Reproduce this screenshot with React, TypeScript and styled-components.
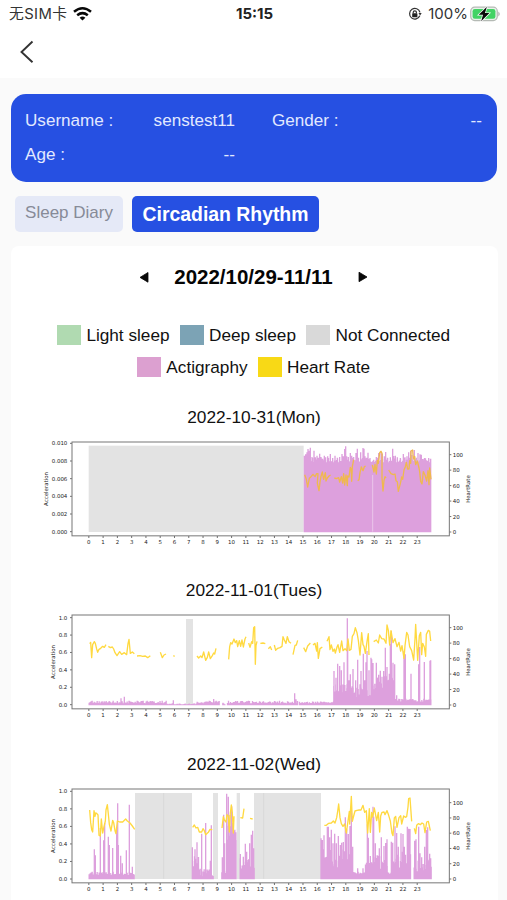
import React from "react";
import styled, { createGlobalStyle } from "styled-components";

const GlobalStyle = createGlobalStyle`
  *, *::before, *::after { box-sizing: border-box; }
  html, body { margin: 0; height: 900px; overflow: hidden; background: #fafafa; }
  body { font-family: "Liberation Sans", Arial, sans-serif; color: #111; }
`;

const Screen = styled.div`
  width: 507px;
  height: 900px;
  overflow: hidden;
  display: flex;
  flex-direction: column;
  > * { flex-shrink: 0; }
`;

const StatusBar = styled.header`
  display: grid;
  grid-template-columns: 1fr auto 1fr;
  align-items: center;
  height: 28px;
  padding: 0 6px 0 9px;
  background: #fff;
  font: 15px/28px Inter, "Noto Sans CJK SC", sans-serif;
  color: #333;
`;

const StatusGroup = styled.div<{ $end?: boolean }>`
  display: flex;
  align-items: center;
  justify-content: ${(p) => (p.$end ? "flex-end" : "flex-start")};
`;

const Carrier = styled.span`
  font-size: 14.8px;
  letter-spacing: 0.4px;
  margin-right: 6px;
  white-space: nowrap;
`;

const Clock = styled.strong`
  font-size: 15px;
  font-weight: 700;
  color: #222;
  margin-right: 1px;
`;

const Percent = styled.span`
  margin: 0 2px 0 6px;
  font-size: 15px;
`;

const NavBar = styled.nav`
  height: 50px;
  padding: 12px 0 0 20px;
  background: #fff;
`;

const Profile = styled.section`
  display: grid;
  grid-template-columns: 210px 210px;
  column-gap: 37px;
  grid-auto-rows: 34px;
  margin: 16px 10px 0 11px;
  padding: 10px 14px 0;
  height: 88px;
  border-radius: 15px;
  background: #2650e2;
  color: #e2e9ff;
`;

const Field = styled.div`
  display: flex;
  justify-content: space-between;
  font-size: 17.1px;
  line-height: 34px;
`;

const Tabs = styled.div`
  display: flex;
  gap: 9px;
  padding: 14px 15px 0;
`;

const Tab = styled.button<{ $active?: boolean }>`
  height: 36px;
  width: ${(p) => (p.$active ? 187 : 108)}px;
  padding: ${(p) => (p.$active ? "1px 0 0" : "0 0 3px")};
  border: 0;
  border-radius: 5px;
  white-space: nowrap;
  font-family: inherit;
  font-size: ${(p) => (p.$active ? 19.4 : 17)}px;
  font-weight: ${(p) => (p.$active ? 700 : 400)};
  color: ${(p) => (p.$active ? "#fff" : "#878b98")};
  background: ${(p) => (p.$active ? "#2650e2" : "#e5e9f7")};
`;

const Card = styled.main`
  height: 680px;
  margin: 14px 9px 0 11px;
  border-radius: 8px 8px 0 0;
  background: #fff;
`;

const DateNav = styled.div`
  display: flex;
  align-items: center;
  justify-content: center;
  gap: 25px;
  height: 61px;
  padding-right: 2px;
  color: #050505;
`;

const DateRange = styled.span`
  font-size: 20.5px;
  font-weight: 700;
`;

const Legend = styled.div`
  display: flex;
  flex-direction: column;
  gap: 12px;
  padding: 18px 2px 0 0;
`;

const LegendRow = styled.div`
  display: flex;
  justify-content: center;
  gap: 10px;
  height: 20px;
`;

const LegendItem = styled.div`
  display: flex;
  align-items: center;
  gap: 5px;
  font-size: 17.2px;
  line-height: 20px;
  white-space: nowrap;
`;

const Swatch = styled.span<{ $color: string }>`
  width: 24.5px;
  height: 20px;
  background: ${(p) => p.$color};
`;

const ChartList = styled.div`
  padding-top: 27px;
`;

const Day = styled.section`
  height: 173.35px;
`;

const DayTitle = styled.h2`
  margin: 0;
  height: 29px;
  text-align: center;
  font-size: 17.3px;
  font-weight: 400;
  line-height: 26px;
  padding-right: 1px;
`;

const Plot = styled.svg`
  display: block;
  width: 440px;
  height: 114px;
  margin-left: 24px;
  text {
    font-family: "DejaVu Sans", sans-serif;
    font-size: 16.4px;
    fill: #222;
  }
`;

type Pt = [number, number];
type Run = { from: number; to: number; y: number; jitter: number };
type Chart = {
  title: string;
  dy: number;
  accTicks: [string, number][];
  labelX: number;
  hr100: number;
  base: number;
  greys: Pt[];
  greyTop: number;
  lines: number[];
  runs: Run[];
  spikes: string;
  beats: string;
  beatColor: string;
  gapX?: number;
};

const ticks = (labels: string[], first: number, last: number): [string, number][] =>
  labels.map((l, i) => [l, first + ((last - first) * i) / (labels.length - 1)]);

const unit = ["1.0", "0.8", "0.6", "0.4", "0.2", "0.0"];

const charts: Chart[] = [
  {
    title: "2022-10-31(Mon)",
    dy: -100,
    accTicks: ticks(["0.010", "0.008", "0.006", "0.004", "0.002", "0.000"], 131, 396),
    labelX: -2,
    hr100: 165,
    base: 396,
    greys: [[161, 806]],
    greyTop: 138,
    lines: [],
    beatColor: "#efb84f",
    gapX: 1013,
    runs: [{ from: 807, to: 1188, y: 181, jitter: 7 }],
    spikes:
      "808,168 812,164 816,158 819,148 822,153 826,144 831,172 837,153 841,173 846,168 850,174 854,162 858,172 863,177 868,168 872,173 878,170 886,163 893,175 900,168 907,174 914,172 921,163 925,170 929,148 932,140 935,170 940,172 946,160 950,168 956,172 963,160 967,147 970,174 977,158 984,145 987,147 990,170 995,174 999,159 1005,175 1016,180 1024,172 1031,160 1038,158 1042,162 1048,170 1052,157 1058,175 1066,173 1073,147 1076,169 1081,168 1087,173 1096,175 1105,163 1110,173 1116,170 1121,158 1127,153 1131,166 1138,151 1144,174 1149,160 1155,164 1159,165 1167,178 1175,184 1181,175 1187,177",
    beats:
      "809,225 814,239 818,262 823,236 828,231 834,224 840,231 845,222 849,222 847,250 852,273 855,247 858,230 862,217 866,239 871,219 873,244 877,235 882,229 887,226|898,235 904,237 911,234 914,247 919,231 923,250 926,222 929,256 933,226 937,258 938,229 942,232 946,203 949,211 950,245 952,201 956,180|968,243 972,240 975,219 979,202 984,213 988,201 992,199|1012,196 1017,217 1020,194 1024,223 1027,182 1030,191 1034,159 1038,155 1041,161 1041,234 1044,274 1047,242 1050,231 1053,235|1061,211 1068,222 1075,225 1080,223 1083,243 1087,246 1090,275 1096,252 1100,232 1103,239 1107,211 1111,201 1114,188 1118,208 1122,208 1124,183 1127,191 1128,154 1133,151 1135,178 1139,170 1142,195 1147,184 1152,205 1154,216 1157,245 1161,253 1165,216 1170,226 1175,244 1179,213 1182,255 1184,205 1188,239",
  },
  {
    title: "2022-11-01(Tues)",
    dy: -95,
    accTicks: ticks(unit, 130, 391),
    labelX: 19,
    hr100: 160,
    base: 391,
    greys: [[453, 474]],
    greyTop: 134,
    lines: [],
    beatColor: "#ffd940",
    runs: [
      { from: 161, to: 395, y: 383, jitter: 4 },
      { from: 395, to: 485, y: 389, jitter: 2 },
      { from: 485, to: 552, y: 383, jitter: 4 },
      { from: 562, to: 570, y: 388, jitter: 3 },
      { from: 576, to: 787, y: 383, jitter: 4 },
      { from: 792, to: 895, y: 384, jitter: 3 },
      { from: 895, to: 950, y: 343, jitter: 13 },
      { from: 950, to: 1018, y: 350, jitter: 18 },
      { from: 1018, to: 1078, y: 322, jitter: 20 },
      { from: 1078, to: 1188, y: 378, jitter: 5 },
    ],
    spikes:
      "258,372 268,367 247,380 282,379 375,380 415,378 536,374 545,382 564,385 779,357 783,375 897,290 903,310 908,268 914,275 919,288 927,264 936,330 942,318 946,300 950,345 937,132 938,202 954,284 962,318 968,256 975,330 978,290 985,238 989,318 993,264 996,230 1002,288 1008,250 1010,255 1014,266 1024,265 1031,301 1036,289 1041,307 1046,290 1051,220 1056,278 1063,298 1066,208 1069,170 1074,265 1079,270 1085,363 1108,252 1111,240 1107,230 1128,298 1151,270 1154,218 1168,263 1185,259 1187,258",
    beats:
      "164,208 167,204 170,250 173,211 178,202 181,207 185,224 188,234 192,225 197,222 203,216 208,219 213,211|220,216 226,220 232,218 236,224 240,235 246,244 254,232 260,240 268,235 275,241 279,208 282,195 286,237 292,233 298,238|306,245 315,244 323,246 331,245 338,250 346,244|376,234 382,250 387,242 393,239|415,244 419,246|486,245 491,251 497,245 501,250 506,233 512,258 517,249 521,233 526,253 532,244 536,236 539,239 543,222|581,255 584,217 587,205 591,209 597,194 601,205 605,199 608,217 613,199 617,216 621,197 625,218 630,194 633,187|641,206 645,219 650,202 653,207 656,160 659,157 661,270 663,214 666,201|676,207 684,206 691,208|700,223 706,217 710,227|718,212 722,228 728,222 735,220 741,216 744,187 748,197 753,207 757,187 762,202 768,207|774,241 780,213 784,212 788,198|806,220 812,232 818,215 826,206|834,212 840,207 845,230 847,205 850,252 855,223 862,218|876,201 882,187 885,226 889,212 894,231 898,224 901,236 906,218 909,211 914,234 920,200 924,229 930,223 935,229 939,194 943,228 948,225 952,186 957,178 961,160 966,175 970,198 975,242 980,175 984,211 987,216 991,237 996,202 1000,178 1002,242|1016,202 1024,197 1030,206 1034,182 1040,193 1047,194 1053,207 1056,152 1060,168 1064,212 1068,169 1074,205 1080,193 1086,217 1092,204 1097,230 1101,214 1107,252 1110,214 1115,174 1119,182 1124,217 1130,229 1136,257 1140,193 1142,150 1148,258 1153,184 1157,174 1160,241 1163,207 1168,218 1172,246 1174,180 1180,168 1184,171 1187,200",
  },
  {
    title: "2022-11-02(Wed)",
    dy: -90,
    accTicks: ticks(unit, 124, 387),
    labelX: 19,
    hr100: 158,
    base: 386,
    greys: [[300, 471], [534, 549], [605, 615], [657, 858]],
    greyTop: 129,
    lines: [386, 686],
    beatColor: "#ffd940",
    runs: [
      { from: 161, to: 299, y: 370, jitter: 5 },
      { from: 471, to: 491, y: 337, jitter: 20 },
      { from: 491, to: 534, y: 368, jitter: 12 },
      { from: 559, to: 574, y: 360, jitter: 14 },
      { from: 574, to: 602, y: 248, jitter: 22 },
      { from: 614, to: 657, y: 340, jitter: 16 },
      { from: 857, to: 953, y: 325, jitter: 30 },
      { from: 953, to: 990, y: 368, jitter: 3 },
      { from: 990, to: 1010, y: 348, jitter: 14 },
      { from: 1010, to: 1057, y: 335, jitter: 22 },
      { from: 1057, to: 1068, y: 369, jitter: 4 },
      { from: 1068, to: 1128, y: 325, jitter: 28 },
      { from: 1136, to: 1188, y: 345, jitter: 20 },
    ],
    spikes:
      "178,298 181,316 196,234 206,271 209,219 223,285 220,260 233,294 245,240 248,160 250,285 257,317 262,340 274,301 283,164 292,350 472,292 480,298 486,277 500,251 512,219 526,332 529,226 562,322 566,194 569,280 575,131 580,140 585,195 590,169 594,220 598,290 603,270 616,312 625,320 631,281 635,305 641,328 644,280 649,254 653,242 656,295 858,265 862,270 867,256 877,230 880,230 884,262 889,239 894,280 899,251 904,280 910,258 916,285 920,278 925,276 931,202 935,238 940,252 945,228 949,215 953,290 949,170 968,355 984,355 997,223 1000,263 1006,318 1014,170 1016,200 1021,280 1026,325 1033,295 1039,262 1047,288 1052,279 1056,268 1069,275 1073,278 1080,229 1085,249 1090,290 1098,250 1104,252 1108,290 1117,230 1121,236 1125,237 1139,272 1143,268 1151,230 1155,310 1160,322 1169,290 1174,240 1178,232 1184,311 1187,325",
    beats:
      "164,180 167,218 170,239 173,246 177,182 180,199 182,189 185,190 189,195 192,256 196,258 199,207 203,249 207,230 211,213 213,180 217,164 220,192 223,223 228,243 233,211 236,218 240,242 243,251 247,213 254,216 263,216 272,207 277,213 285,219 292,228 299,238|473,232 478,225 483,234 488,232 493,246 500,246 504,236 508,242 512,254 520,247 525,238 532,239|561,234 565,200 568,210 573,216 576,194 580,198 583,246 586,189 589,165 592,188 595,249 597,199|616,203 623,204 627,176|645,205 653,207|868,226 874,226 881,220 889,219 895,213 900,219 905,203 908,184 911,162 915,203 919,221 924,229 929,222 934,249 939,213 943,184 944,222 949,139 952,214 956,198 960,183 966,181 972,180 978,180 984,166 989,187 994,182 998,249 1003,176 1006,247 1010,187 1013,201 1018,174 1021,190 1025,212 1030,187 1034,246 1037,198 1041,187 1047,186 1050,194 1056,182 1061,196 1066,213 1071,250 1074,257 1078,204 1082,199 1086,232 1092,203 1097,197 1100,222 1106,198 1111,202 1115,200 1119,171 1121,146 1125,144 1130,214|1138,235 1142,251 1145,226 1150,221 1156,224 1161,219 1166,222 1170,248 1175,216 1180,214 1186,242",
  },
];

/* Minute-level activity rises from a resting level with a small repeatable variation. */
function activityPath(chart: Chart): string {
  let seed = 17;
  const next = () => {
    seed = (seed * 1103515245 + 12345) % 2147483648;
    return seed / 2147483648;
  };
  const cols: string[] = [];
  chart.runs.forEach((run) => {
    for (let x = run.from; x < run.to; x += 3) {
      const top = run.y + (next() * 2 - 1) * run.jitter;
      cols.push(`M${x + 1.5} ${chart.base + 2}V${Math.min(top, chart.base - 1).toFixed(1)}`);
    }
  });
  chart.spikes.split(" ").forEach((s) => {
    const [x, y] = s.split(",");
    cols.push(`M${x} ${chart.base + 2}V${y}`);
  });
  return cols.join("");
}

const beatPath = (beats: string) =>
  beats.split("|").map((part) => "M" + part.split(" ").join("L")).join("");

function DayChart({ chart }: { chart: Chart }) {
  const hours = Array.from({ length: 24 }, (_, h) => h);
  const hrTicks = ticks(["100", "80", "60", "40", "20", "0"], chart.hr100, chart.base + 1);
  return (
    <Day>
      <DayTitle>{chart.title}</DayTitle>
      <Plot viewBox="0 0 1320 342">
        <g transform={`translate(0 ${chart.dy})`}>
          {chart.greys.map(([a, b]) => (
            <rect key={a} x={a} y={chart.greyTop} width={b - a} height={chart.base - chart.greyTop + 1} fill="#e3e3e3" />
          ))}
          {chart.lines.map((x) => (
            <path key={x} d={`M${x} ${chart.greyTop}V${chart.base}`} stroke="#d8d8d8" strokeWidth="3" />
          ))}
          <path d={activityPath(chart)} stroke="#dda0dd" strokeWidth="4" fill="none" />
          {chart.gapX && <path d={`M${chart.gapX} 226V396`} stroke="#ecccec" strokeWidth="2.5" />}
          <path d={beatPath(chart.beats)} stroke={chart.beatColor} strokeWidth="4" strokeLinejoin="round" fill="none" />
          {chart.accTicks.map(([label, y]) => (
            <g key={label}>
              <path d={`M105 ${y}H111`} stroke="#555" strokeWidth="2.5" />
              <text x="97" y={y + 6} textAnchor="end">{label}</text>
            </g>
          ))}
          {hrTicks.map(([label, y]) => (
            <g key={label}>
              <path d={`M1243 ${y}H1249`} stroke="#555" strokeWidth="2.5" />
              <text x="1253" y={y + 6}>{label}</text>
            </g>
          ))}
        </g>
        <rect x="111" y="27" width="1132" height="281.5" fill="none" stroke="#777" strokeWidth="3" />
        {hours.map((h) => (
          <g key={h}>
            <path d={`M${161.5 + h * 42.83} 309v6`} stroke="#555" strokeWidth="2.5" />
            <text x={161.5 + h * 42.83} y="333" textAnchor="middle">{h}</text>
          </g>
        ))}
        <text transform={`translate(${chart.labelX + 40} 168) rotate(-90)`} textAnchor="middle">Acceleration</text>
        <text transform="translate(1304 168) rotate(-90)" textAnchor="middle">HeartRate</text>
      </Plot>
    </Day>
  );
}

const WifiIcon = () => (
  <svg width="19" height="14" viewBox="0 0 19 14" fill="none" stroke="#080808" strokeWidth="2.5">
    <path d="M1 4.8Q9.5-2.2 18 4.8" />
    <path d="M4.2 8.3Q9.5 4 14.8 8.3" />
    <path d="M6.6 10.7Q9.5 8.3 12.4 10.7L9.5 13.6Z" fill="#080808" stroke="none" />
  </svg>
);

const RotationLockIcon = () => (
  <svg width="14" height="14" viewBox="0 0 14 14" fill="none" stroke="#333" strokeWidth="1.2">
    <path d="M11.8 8.8A5.3 5.3 0 1 1 12 5.3" />
    <path d="M10.5 6H13.7L12.1 8.5Z" fill="#333" stroke="none" />
    <rect x="4.2" y="6.3" width="5.2" height="3.9" rx=".6" fill="#222" stroke="none" />
    <path d="M5.2 6.5V5.4a1.6 1.6 0 0 1 3.2 0v1.1" />
  </svg>
);

const BatteryIcon = () => (
  <svg width="31" height="16" viewBox="0 0 31 16">
    <rect x=".7" y="1.2" width="26.6" height="13.4" rx="4" fill="#e8f2e9" stroke="#b5bab5" strokeWidth="1.2" />
    <rect x="2.6" y="3.1" width="22.8" height="9.6" rx="2.2" fill="#43d365" />
    <path d="M28.4 5.5Q31 8 28.4 10.4Z" fill="#aaa" />
    <path d="M16.9.8L8.7 8.8H13L11.2 15.3 19.4 7.1H15Z" fill="#080808" stroke="#fff" strokeWidth="1.4" paintOrder="stroke" />
  </svg>
);

const Arrow = ({ next }: { next?: boolean }) => (
  <svg width="10" height="12" viewBox="0 0 10 12">
    <path d={next ? "M1 1.2L9 6 1 10.7Z" : "M9 1.5L1 6.4 9 11.2Z"} fill="#080808" stroke="#080808" strokeWidth=".8" strokeLinejoin="round" />
  </svg>
);

const legendRows = [
  [["Light sleep", "#b0dab1"], ["Deep sleep", "#7ca3b5"], ["Not Connected", "#d9d9d9"]],
  [["Actigraphy", "#dca0d0"], ["Heart Rate", "#f8d916"]],
];

export default function App() {
  return (
    <Screen>
      <GlobalStyle />
      <StatusBar>
        <StatusGroup>
          <Carrier>无SIM卡</Carrier>
          <WifiIcon />
        </StatusGroup>
        <Clock>15:15</Clock>
        <StatusGroup $end>
          <RotationLockIcon />
          <Percent>100%</Percent>
          <BatteryIcon />
        </StatusGroup>
      </StatusBar>
      <NavBar>
        <svg width="14" height="24" viewBox="0 0 14 24" fill="none" stroke="#333" strokeWidth="1.9">
          <path d="M12.5 1.5L1.5 12 12.5 22.3" />
        </svg>
      </NavBar>
      <Profile>
        <Field><span>Username :</span><span>senstest11</span></Field>
        <Field><span>Gender :</span><span>--</span></Field>
        <Field><span>Age :</span><span>--</span></Field>
      </Profile>
      <Tabs>
        <Tab>Sleep Diary</Tab>
        <Tab $active>Circadian Rhythm</Tab>
      </Tabs>
      <Card>
        <DateNav>
          <Arrow />
          <DateRange>2022/10/29-11/11</DateRange>
          <Arrow next />
        </DateNav>
        <Legend>
          {legendRows.map((row, i) => (
            <LegendRow key={i}>
              {row.map(([label, color]) => (
                <LegendItem key={label}><Swatch $color={color} />{label}</LegendItem>
              ))}
            </LegendRow>
          ))}
        </Legend>
        <ChartList>
          {charts.map((chart) => <DayChart key={chart.title} chart={chart} />)}
        </ChartList>
      </Card>
    </Screen>
  );
}
